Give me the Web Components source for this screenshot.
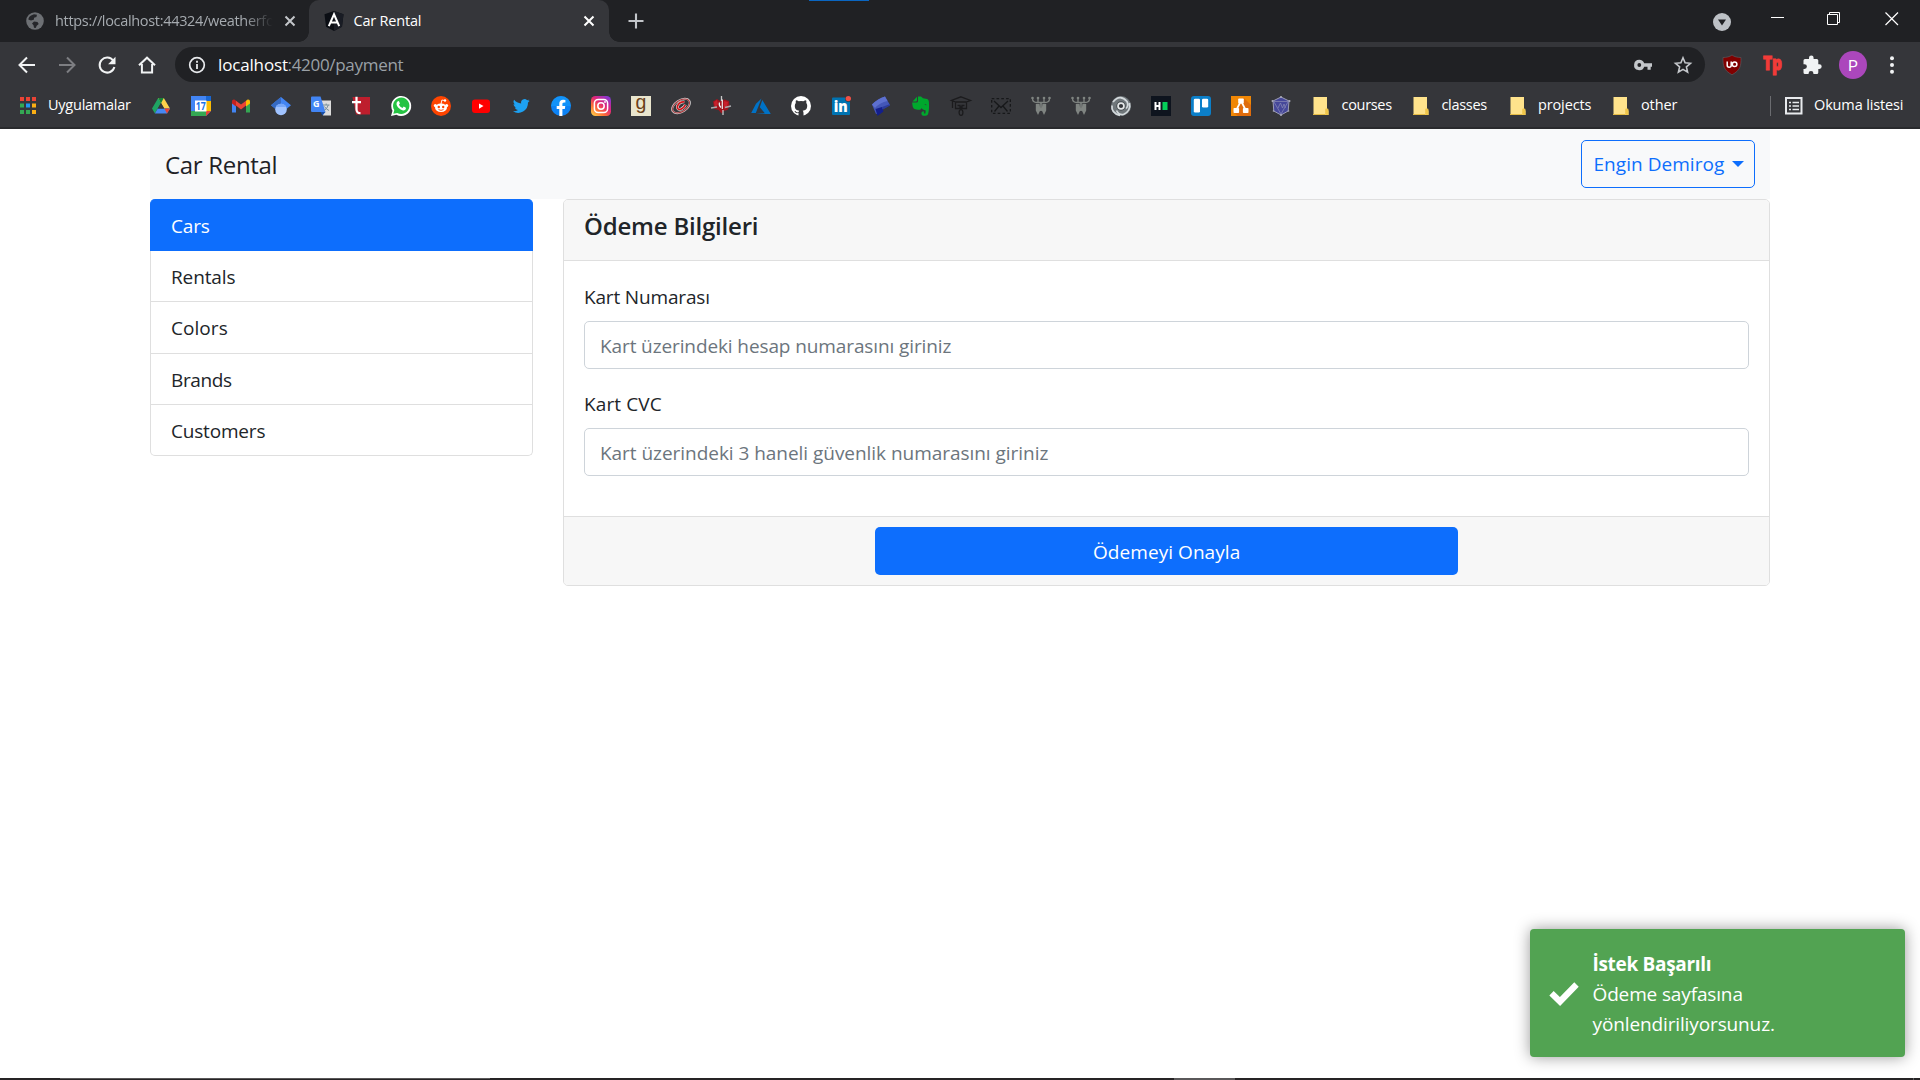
<!DOCTYPE html>
<html lang="tr">
<head>
<meta charset="utf-8">
<title>Car Rental</title>
<style>
html,body{margin:0;height:100%;overflow:hidden;background:#fff}
body{font-family:"Open Sans","Noto Sans",sans-serif;font-size:19px;color:#212529}
</style>
</head>
<body>
<desktop-screen></desktop-screen>
<script>
const make = (name, html, extra) => {
  const t = document.createElement('template');
  t.innerHTML = html;
  customElements.define(name, class extends HTMLElement {
    constructor() { super(); this.attachShadow({ mode: 'open' }).appendChild(t.content.cloneNode(true)); }
    connectedCallback() { if (extra) extra.call(this, this.shadowRoot); }
  });
};

/* Icon drawings: [viewBox width, viewBox height, markup] */
const I = {
  globe: [18,18,'<circle cx="9" cy="9" r="8.8" fill="#6d7074"/><path d="M5 3.500 8 2.200l3 .6-.6 2.200-2.300.8-.3 2L5 8.600 2.300 7.400C2.600 5.600 3.600 4.300 5 3.500zM8 9.500l3.500.4 1.200 2-2 1.900-1 2.200-1.700-.2-.5-2.600-1.500-1.700z" fill="#25262a"/>'],
  x: [12,12,'<path d="M1.500 1.500l9 9m0-9l-9 9" stroke="currentColor" stroke-width="2" fill="none"/>'],
  angular: [20,20,'<path d="M10 0l9.500 3.300-1.500 12.400L10 20 2 15.700.5 3.300z" fill="#0b0e14"/><path d="M10 0l9.500 3.300-1.500 12.400L10 20z" fill="#191c24"/><path d="M4.800 15.200L10 3.300l5.200 11.900M7 11.400h6" stroke="#fff" stroke-width="2" fill="none"/>'],
  plus: [16,16,'<path d="M8 .5v15M.5 8h15" stroke="#c3c6ca" stroke-width="2.100"/>'],
  search: [18,18,'<circle cx="9" cy="9" r="9" fill="#bdc1c6"/><path d="M5 6.500h8L9 12.500z" fill="#202124"/>'],
  min: [14,14,'<path d="M0 5.500h13" stroke="#fff" stroke-width="1"/>'],
  restore: [14,14,'<path d="M.5 2.500h10v10H.5zM2.500 2.500v-2h10v10h-2" stroke="#fff" fill="none"/>'],
  close: [14,14,'<path d="M.5 .5l12.500 12.500M13 .5L.5 13" stroke="#fff" stroke-width="1.200"/>'],
  back: [18,18,'<path d="M17 9H2M9 1.500L1.500 9 9 16.500" stroke="#f1f3f4" stroke-width="2" fill="none"/>'],
  fwd: [18,18,'<path d="M1 9h15M9 1.500L16.500 9 9 16.500" stroke="#7d7e82" stroke-width="2" fill="none"/>'],
  reload: [18,18,'<path d="M15.300 4.800A7.500 7.500 0 1 0 16.400 11" stroke="#f1f3f4" stroke-width="2" fill="none"/><path d="M17.500 .8v7.400h-7.400z" fill="#f1f3f4"/>'],
  home: [18,18,'<path d="M1 9.300L9 1.700l8 7.600M3.900 8v8.600h10.200V8" stroke="#f1f3f4" stroke-width="2" fill="none"/>'],
  info: [18,18,'<circle cx="9" cy="9" r="7.300" stroke="#e8eaed" stroke-width="1.700" fill="none"/><path d="M9 8v5M9 4.800v1.900" stroke="#e8eaed" stroke-width="1.800"/>'],
  key: [18,12,'<path fill-rule="evenodd" d="M5.300 .8a5.200 5.200 0 1 0 4.900 6.900h3.300v3h3.200v-3h1.300V4.300h-7.800A5.200 5.200 0 0 0 5.300 .8zm0 3.300a1.900 1.900 0 1 1 0 3.800 1.900 1.900 0 0 1 0-3.800z" fill="#c4c7cb"/>'],
  star: [18,18,'<path d="M9 1.800l2.100 5 5.400.5-4.100 3.600 1.200 5.300L9 13.400l-4.600 2.800 1.200-5.300-4.100-3.600 5.400-.5z" stroke="#c4c7cb" stroke-width="1.600" fill="none"/>'],
  shield: [20,20,'<path d="M10 0c2.300 1.800 5.500 2.500 9 2.500.2 8.500-.8 12.800-9 17.300C1.800 15.300.8 11 1 2.500c3.500 0 6.700-.7 9-2.500z" fill="#800000" stroke="#5c6065" stroke-width=".6"/><path d="M5.200 6.500v3.800a2 2 0 0 0 4 0V6.500" stroke="#fff" stroke-width="1.500" fill="none"/><circle cx="12.600" cy="9.300" r="2.300" stroke="#fff" stroke-width="1.500" fill="none"/>'],
  tp: [20,20,'<text x="0" y="15" font-family="Open Sans" font-weight="800" font-size="18.500" textLength="19" lengthAdjust="spacingAndGlyphs" fill="#f23b38" stroke="#f23b38" stroke-width=".9">Tp</text>'],
  puzzle: [20,20,'<path d="M1.500 5.500q0-1.500 1.500-1.500h4v-1.300a2.300 2.300 0 0 1 4.600 0V4h3.200q1.500 0 1.500 1.500v3.700h1a2.400 2.400 0 0 1 0 4.800h-1v3.500q0 1.500-1.500 1.500h-3.400v-.7a2.400 2.400 0 0 0-4.800 0v.7H3q-1.500 0-1.500-1.500V14h1a2.400 2.400 0 0 0 0-4.800h-1z" fill="#f1f3f4"/>'],
  avatar: [28,28,'<circle cx="14" cy="14" r="14" fill="#ab47bc"/><text x="14" y="19.500" text-anchor="middle" font-family="Roboto" font-size="15.500" fill="#fff">P</text>'],
  dots: [4,18,'<circle cx="2" cy="2.200" r="2" fill="#f1f3f4"/><circle cx="2" cy="9" r="2" fill="#f1f3f4"/><circle cx="2" cy="15.800" r="2" fill="#f1f3f4"/>'],
  apps: [16,17,'<path d="M0 0h4v4H0zM6 0h4v4H6zM12 0h4v4h-4z" fill="#ea4335"/><path d="M0 6.500h4v4H0zM0 13h4v4H0zM6 13h4v4H6z" fill="#34a853"/><path d="M6 6.500h4v4H6z" fill="#2196f3"/><path d="M12 6.500h4v4h-4zM12 13h4v4h-4z" fill="#fbaf14"/>'],
  drive: [20,20,'<path d="M7.200 2h5.600L6.800 12.200 3.900 17.500 1 12.500z" fill="#1fa463"/><path d="M7.200 2h5.600L19 12.500h-5.700z" fill="#ffd04b"/><path d="M6.800 12.500H19l-3 5H3.900z" fill="#4688f4"/><path d="M10 7.200l3 5.300H7z" fill="#35363a"/><path d="M13.300 12.500H19l-3 5z" fill="#ea4335"/><path d="M7.200 2h5.600L10 7.200z" fill="#188038"/>'],
  cal: [20,20,'<path d="M0 0h20v15l-5 5H0z" fill="#4285f4"/><path d="M15 5h5v10h-5z" fill="#fbbc04"/><path d="M0 15h15v5H0z" fill="#34a853"/><path d="M15 0h5v5h-5z" fill="#1967d2"/><path d="M15 15h5l-5 5z" fill="#ea4335"/><path d="M4 4.500h11.500V15.500H4z" fill="#fff"/><text x="9.800" y="14" text-anchor="middle" font-family="Open Sans" font-weight="700" font-size="10.500" textLength="10" lengthAdjust="spacingAndGlyphs" fill="#1a73e8">17</text>'],
  gmail: [20,20,'<path d="M1 5v11.500h4V9z" fill="#4285f4"/><path d="M15 9v7.500h4V5z" fill="#34a853"/><path d="M5 4.800v4.800l5 3.800 5-3.800V4.800L10 8.500z" fill="#ea4335"/><path d="M1 5.500v2l4 3V4.800L4 4C2.500 3 1 4 1 5.500z" fill="#c5221f"/><path d="M19 5.500v2l-4 3V4.800L16 4c1.500-1 3 0 3 1.500z" fill="#fbbc04"/>'],
  scholar: [20,20,'<path d="M10 1L0 9.200l4.800 4L10 8l5.200 5.200L20 9.200z" fill="#4285f4"/><path d="M10 1L0 9.200l4.800 4L10 8z" fill="#356ac3"/><circle cx="10" cy="13.500" r="5.800" fill="#a0c3ff"/><path d="M4.800 11.100a5.800 5.800 0 0 1 10.400 0z" fill="#76a7fa"/>'],
  translate: [20,20,'<path d="M9 4.500h11V19.500H12z" fill="#dcdcdc"/><path d="M0 1.300Q0 .5 1 .5h8.500l5 15.500H1.200Q0 16 0 15z" fill="#4285f4"/><path d="M9.500 16h5l-3 3.500z" fill="#174ea6"/><text x="2" y="11" font-family="Open Sans" font-weight="700" font-size="9" fill="#fff">G</text><path d="M12 9h6.500M15.200 7.500V9M17.300 9q-1 3.500-4 5.500M13.500 10.500q1.500 2.800 4.500 4" stroke="#77909c" stroke-width="1" fill="none"/>'],
  tsq: [20,20,'<path d="M1.500 1h17.500v17.500H5z" fill="#be1e2d"/><path d="M5.500 .8v12.500q0 4 4 3.900M1 6.200h9" stroke="#fff" stroke-width="2.200" fill="none"/>'],
  whatsapp: [20,20,'<path d="M0 20l1.500-5.200A10 10 0 1 1 5.400 18.700z" fill="#fff"/><path d="M2.300 17.700l1-3.600a8.200 8.200 0 1 1 3 2.800z" fill="#25c343"/><path d="M6.800 5.300q.8-.7 1.300.2l.8 1.900-1 1.300q1.200 2.200 3.600 3.200l1.200-1.300 2.200 1.100c.3 2-1.400 2.900-2.900 2.700-3.200-.6-6-3.400-6.500-6.100q-.2-1.800 1.300-3z" fill="#fff"/>'],
  reddit: [20,20,'<circle cx="10" cy="10" r="10" fill="#ff4500"/><ellipse cx="10" cy="11.800" rx="6" ry="4.200" fill="#fff"/><circle cx="4.300" cy="9.500" r="1.500" fill="#fff"/><circle cx="15.700" cy="9.500" r="1.500" fill="#fff"/><circle cx="14" cy="4.500" r="1.200" fill="#fff"/><path d="M10 8l.9-4 3 .6" stroke="#fff" stroke-width=".9" fill="none"/><circle cx="7.800" cy="11" r="1.200" fill="#ff4500"/><circle cx="12.200" cy="11" r="1.200" fill="#ff4500"/><path d="M7.500 13.600q2.500 1.500 5 0" stroke="#ff4500" stroke-width=".9" fill="none"/>'],
  youtube: [20,20,'<rect x="1" y="3.500" width="18" height="13.500" rx="3" fill="#f00"/><path d="M8 7.400v5.400l4.500-2.700z" fill="#fff"/>'],
  twitter: [20,20,'<path transform="translate(1.500 1.200) scale(.73)" d="M23.600 4.900c-.8.400-1.700.6-2.700.8 1-.6 1.700-1.500 2.100-2.600-.9.500-1.900.9-3 1.100a4.700 4.700 0 0 0-8.100 4.300C7.900 8.300 4.400 6.400 2.200 3.600a4.700 4.700 0 0 0 1.400 6.300c-.8 0-1.500-.2-2.100-.6 0 2.300 1.600 4.200 3.800 4.700-.7.200-1.400.2-2.100.1.600 1.900 2.300 3.200 4.400 3.300A9.500 9.500 0 0 1 .6 19.300 13.400 13.400 0 0 0 21.200 7.400c.9-.7 1.700-1.500 2.400-2.500z" fill="#1da1f2"/>'],
  facebook: [20,20,'<circle cx="10" cy="10" r="10" fill="#0c82f5"/><path d="M0 10a10 10 0 0 1 20 0z" fill="#18a3fb" opacity=".55"/><path d="M8.300 20v-7H5.700v-3h2.600V7.700c0-2.600 1.500-4 3.800-4l2.300.2v2.500h-1.300c-1.300 0-1.700.8-1.700 1.600V10h2.900l-.5 3h-2.400v7z" fill="#fff"/>'],
  instagram: [20,20,'<defs><linearGradient id="ig" x1=".1" y1="1" x2=".9" y2="0"><stop offset="0" stop-color="#ffd04a"/><stop offset=".3" stop-color="#fd6e35"/><stop offset=".6" stop-color="#e0257b"/><stop offset="1" stop-color="#7a3ae0"/></linearGradient></defs><rect width="20" height="20" rx="4.500" fill="url(#ig)"/><rect x="3.400" y="3.400" width="13.200" height="13.200" rx="3.800" stroke="#fff" stroke-width="1.500" fill="none"/><circle cx="10" cy="10" r="3.200" stroke="#fff" stroke-width="1.500" fill="none"/><circle cx="14" cy="6" r=".9" fill="#fff"/>'],
  goodreads: [20,20,'<path d="M0 0h20v20H0z" fill="#e9e5cd"/><text x="10" y="13" text-anchor="middle" font-family="Liberation Sans" font-size="19.500" fill="#6b3f18">g</text>'],
  swirl: [20,20,'<g transform="rotate(-32 10 10)" fill="none"><ellipse cx="10" cy="10" rx="9.800" ry="5.800" stroke="#cfcfcf" stroke-width="2"/><ellipse cx="10" cy="10" rx="9.600" ry="5.600" stroke="#a8383c" stroke-width="1"/><path d="M15 8.300Q11 5.200 6.800 8.300q-2.500 3 1.500 4.300 3.500.6 6-1.300" stroke="#e6e6e6" stroke-width="2.800"/><path d="M15 8.300Q11 5.200 6.800 8.300q-2.500 3 1.500 4.300 3.500.6 6-1.300" stroke="#d3161c" stroke-width="1.700"/></g>'],
  crest: [20,20,'<path d="M2 5.500l4-2.500 3 2 4.500-1.500L18 5l.5 5-2 4-4 1-2 2.500-3-3.500-4-1z" fill="#a0151e"/><path d="M3 6l3-2 1 4-3 4zM13 5l4 1-1 5-3 2z" fill="#c8202b"/><path d="M0 12l6-1M14 11.500l6-1.500" stroke="#a9a9ab" stroke-width="1.300"/><path d="M10.500 0v5M12 14v5" stroke="#c9c9c9" stroke-width="1.300"/><path d="M11.300 3.500v9.500M8.500 6.500q-1 3 1.500 5" stroke="#eee" stroke-width="1.200" fill="none"/>'],
  azure: [20,20,'<path d="M10.500 2.500L5 7.700.2 17h4.600zM11.300 4L8.800 11.200l5 6.000-9 .8H19.800z" fill="#0072c6"/>'],
  github: [20,20,'<circle cx="10" cy="10" r="10" fill="#fff"/><path d="M7.500 20v-3c-2.500.6-3.500-.6-4-1.900l1-.1c.8 1.600 1.800 1.500 3 1.200.1-.7.400-1.100.8-1.500-2.500-.3-4.500-1.300-4.500-5 0-1.200.4-2 1-2.700-.2-.8-.2-1.800.2-2.800.9 0 1.900.5 2.700 1.100a9 9 0 0 1 4.700 0c.8-.6 1.800-1.100 2.700-1.100.4 1 .4 2 .1 2.800.7.700 1 1.500 1 2.700 0 3.700-2 4.700-4.500 5 .6.500.8 1.300.8 2.300v3z" fill="#35363a"/>'],
  linkedin: [20,20,'<rect x="1" y="1.500" width="18" height="17.500" rx="1" fill="#0073b1"/><text x="2.700" y="15.800" font-family="Open Sans" font-weight="800" font-size="15.500" textLength="14" lengthAdjust="spacingAndGlyphs" fill="#fff">in</text><circle cx="17.300" cy="2.600" r="3.300" fill="#35363a"/><circle cx="17.300" cy="2.600" r="2.700" fill="#f05045"/>'],
  tilted: [20,20,'<path d="M1 8.500Q7 2.500 14 .5l5 8.500-7 4L9 17.500 5 18z" fill="#4457b8"/><path d="M1 8.500Q7 2.500 14 .5l2.500 4.500Q9 6.500 4 12z" fill="#5d70cf"/><path d="M4.500 13l6.500-2 1.500 4.500L6.500 20z" fill="#141f8c"/><path d="M11 11l7.500-2.700.5 1.200-7 4z" fill="#2c3c9c"/>'],
  evernote: [20,20,'<path d="M6 .8v3.700q0 1-1 1H1.500L6 .8zM7 .5h3l2 1.700 4.200.8q1.500.5 1.700 3c.4 5 .1 9-.8 12-.5 1.500-2 1.800-4 1.800-1.600 0-2.700-.8-2.700-2.300s1-2.300 2.500-2.300v2.300h1.500l.3-3c-2.300-.3-3.400-1-4-2.400-.7 1.700-2.200 1.900-4 1.700-3.700-.4-4.900-1.500-5.300-5L1.100 6.500h4.300q1.600 0 1.600-1.600z" fill="#00a82d"/><path d="M13.200 8.800q1.500-1.200 2.500.4z" fill="#35363a"/>'],
  cap: [20,20,'<g stroke="#1b1b1d" stroke-width="1.300" fill="none"><path d="M10 .8l9.500 3.700L15 6H5L.5 4.500zM4.500 6v6.500h11V6M6.500 9.500h2.500v1.500h2V9.500h2.500M1.500 5v7"/><ellipse cx="10" cy="16.500" rx="1.900" ry="2.900"/></g>'],
  mail: [20,20,'<g stroke="#17181a" stroke-width="1.300" fill="none"><path d="M.7 2.700h18.600v14.600H.7z" stroke-dasharray="2.600 2.200"/><path d="M3 5l7 6.500L17 5M3.500 15.500L8 10M16.500 15.500L12 10"/></g>'],
  fork: [20,20,'<g stroke="#7d827f" stroke-width="1.300" fill="none"><path d="M1.500 2.500q0 4 4.500 4h8q4.500 0 4.500-4M7 2v4.500M13 2v4.500"/></g><g fill="#7f8481"><path d="M4.800 8h3.800l.8 6L7 19l-2.200-4.500zM11.400 8h3.800v6.500L13 19l-2.400-5zM9.200 7h1.600v8H9.200z"/><circle cx="1.500" cy="2" r="1.300"/><circle cx="7" cy="2" r="1.300"/><circle cx="13" cy="2" r="1.300"/><circle cx="18.500" cy="2" r="1.300"/></g>'],
  spiral: [20,20,'<circle cx="10" cy="10" r="10" fill="#6f767a"/><g fill="none" stroke="#d3d9dc" stroke-width="1.700"><path d="M2 6Q9-2.500 16 5.500q2 4-1 7M18.500 7q1.500 8-6 11.500-5 .5-7-4M9 19.500Q0 17 1 9.500"/></g><circle cx="10" cy="10" r="4.700" fill="#454c50"/><circle cx="10" cy="10" r="3.800" fill="#e4e7e8"/><circle cx="10" cy="10" r="2.100" fill="#33363a"/>'],
  hk: [20,20,'<path d="M0 0h20v20H0z" fill="#0e141e"/><path d="M4.500 6v8M8.500 6v8M4.500 10h4" stroke="#fff" stroke-width="2"/><path d="M11.500 6h5v8h-5z" fill="#05ce59"/>'],
  trello: [20,20,'<rect width="20" height="20" rx="3" fill="#0b7fc9"/><rect x="2.800" y="2.800" width="6.200" height="13.700" rx="1.300" fill="#fff"/><rect x="11" y="2.800" width="6.200" height="8.700" rx="1.300" fill="#fff"/>'],
  drawio: [20,20,'<path d="M0 0h20v20H0z" fill="#f08705"/><path d="M13 2l7 7v11H7l-5-4z" fill="#df6c0c"/><path d="M10 5L5.300 14M10 5l4.700 9" stroke="#fff" stroke-width="1.700"/><rect x="7.200" y="2.500" width="5.600" height="5" rx=".8" fill="#fff"/><rect x="2.500" y="12" width="5.600" height="5" rx=".8" fill="#fff"/><rect x="11.900" y="12" width="5.600" height="5" rx=".8" fill="#fff"/>'],
  hex: [20,20,'<path d="M10 1l8 4-.8 10L10 19l-7.200-4L2 5z" fill="#46489a" stroke="#9b9cb5" stroke-width="1"/><path d="M3 5.500h14M3 6l7 12 7-12M7 12l2.500-5 2 5 1.500-4 1.500 4" stroke="#8384b3" stroke-width=".8" fill="none"/><g fill="#adadbd"><circle cx="10" cy="1" r="1"/><circle cx="1.500" cy="5" r="1"/><circle cx="18.500" cy="5" r="1"/><circle cx="10" cy="19" r="1"/><circle cx="2.500" cy="15" r=".8"/><circle cx="17.500" cy="15" r=".8"/></g>'],
  folder: [16,18,'<path d="M.5 0H14v13.500H15.500V18H.5z" fill="#ffe38c"/><path d="M0 17h12v1H0z" fill="#e5bc45"/><path d="M12.200 12.500q0-1 1-1h1q1.300 0 1.300 1.200V18h-3.300z" fill="#f0c64a"/>'],
  list: [18,18,'<rect x="1" y="1" width="15.500" height="15.500" stroke="#e8eaed" stroke-width="2" fill="none"/><path d="M4 5.500h2M4 9h2M4 12.500h2M7.500 5.500h6.500M7.500 9h6.500M7.500 12.500h6.500" stroke="#e8eaed" stroke-width="1.600"/>'],
  check: [30,30,'<path d="M2.500 15.300L11 23.500 27.500 6.500" stroke="#fff" stroke-width="6.200" fill="none"/>'],
};

/* <ui-icon name="..."> draws one icon at its natural size */
customElements.define('ui-icon', class extends HTMLElement {
  connectedCallback() {
    if (this.shadowRoot) return;
    const [w, h, m] = I[this.getAttribute('name')];
    this.attachShadow({ mode: 'open' }).innerHTML =
      `<style>:host{display:block;flex:none;width:${w}px;height:${h}px}svg{display:block;overflow:visible}</style><svg width="${w}" height="${h}" viewBox="0 0 ${w} ${h}">${m}</svg>`;
  }
});

/* <fit-text w="..."> tracks its text so that it fills the given width */
customElements.define('fit-text', class extends HTMLElement {
  connectedCallback() {
    if (this.shadowRoot) return;
    this.attachShadow({ mode: 'open' }).innerHTML =
      '<style>:host{display:block;flex:none;white-space:nowrap}span{display:inline-block}</style><span><slot></slot></span>';
    const s = this.shadowRoot.querySelector('span');
    const n = this.textContent.length, w = +this.getAttribute('w');
    this.style.width = w + 'px';
    s.style.letterSpacing = ((w + .3 - s.getBoundingClientRect().width) / n).toFixed(3) + 'px';
  }
});

make('browser-tabs', `<style>
:host{display:flex;height:42px;background:#202124;color:#fff;font-size:14.500px;line-height:42px}
.tab{display:flex;align-items:center;box-sizing:border-box;height:42px}
.one{width:309px;padding-left:26px;color:#a6abb0}
.one .t{width:220px;margin:0 9px 0 11px;-webkit-mask:linear-gradient(90deg,#000 86%,transparent 99%)}
.two{width:300px;background:#35363a;border-radius:10px 10px 0 0;padding-left:15px;position:relative}
.two:before,.two:after{content:"";position:absolute;bottom:0;width:10px;height:10px}
.two:before{left:-10px;background:radial-gradient(circle at 0 0,transparent 9.500px,#35363a 10px)}
.two:after{right:-10px;background:radial-gradient(circle at 100% 0,transparent 9.500px,#35363a 10px)}
.two .t{margin:0 162px 0 9.500px}
.plus{margin:13px 0 0 19px}
.mark{width:60px;height:1px;background:#0a66c2;margin-left:165px}
.win{margin-left:auto;display:flex;padding-right:21px}
</style>
<div class="tab one"><ui-icon name="globe"></ui-icon><div class="t"><fit-text w="219">https://localhost:44324/weatherfo</fit-text></div><ui-icon name="x" style="color:#c3c6ca"></ui-icon></div>
<div class="tab two"><ui-icon name="angular"></ui-icon><fit-text class="t" w="67.500">Car Rental</fit-text><ui-icon name="x"></ui-icon></div>
<ui-icon class="plus" name="plus"></ui-icon><div class="mark"></div>
<div class="win"><ui-icon name="search" style="margin:12.500px 40px 0 0"></ui-icon><ui-icon name="min" style="margin:12px 42px 0 0"></ui-icon><ui-icon name="restore" style="margin:12px 44px 0 0"></ui-icon><ui-icon name="close" style="margin:12px 0 0"></ui-icon></div>`);

make('browser-toolbar', `<style>
:host{display:flex;align-items:center;box-sizing:border-box;height:45px;background:#35363a;padding:0 25px 0 18px}
.nav{display:flex;gap:22px;width:157px;flex:none}
.box{box-sizing:border-box;flex:none;width:1530px;height:35px;border-radius:18px;background:#202124;display:flex;align-items:center;padding:0 13px 0 13px;font-size:17px;line-height:34px}
.ext{display:flex;align-items:center;margin-left:17px}
</style>
<div class="nav"><ui-icon name="back"></ui-icon><ui-icon name="fwd"></ui-icon><ui-icon name="reload"></ui-icon><ui-icon name="home"></ui-icon></div>
<div class="box"><ui-icon name="info"></ui-icon><fit-text w="69.500" style="color:#fff;margin-left:12px">localhost</fit-text><fit-text w="115.500" style="color:#9aa0a6">:4200/payment</fit-text><ui-icon name="key" style="margin-left:auto"></ui-icon><ui-icon name="star" style="margin-left:22px"></ui-icon></div>
<div class="ext"><ui-icon name="shield"></ui-icon><ui-icon name="tp" style="margin-left:21px"></ui-icon><ui-icon name="puzzle" style="margin-left:19px"></ui-icon><ui-icon name="avatar" style="margin-left:17px"></ui-icon><ui-icon name="dots" style="margin-left:23px"></ui-icon></div>`);

make('browser-bookmarks', `<style>
:host{display:flex;align-items:center;box-sizing:border-box;height:42px;padding:0 17px 3px 20px;background:#35363a;border-bottom:2px solid #292a2d;color:#fff;font-size:14.500px;line-height:20px}
fit-text{margin-bottom:1px}
.row{display:flex;gap:20px;margin-left:20.500px}
.f{display:flex;align-items:center}
.f fit-text{margin-left:12.500px}
.sep{width:1px;height:20px;background:#6b6c70;margin-left:auto}
</style>
<ui-icon name="apps"></ui-icon><fit-text w="82.500" style="margin-left:12px">Uygulamalar</fit-text>
<div class="row"></div>
<div class="f" style="margin-left:22px"><ui-icon name="folder"></ui-icon><fit-text w="50">courses</fit-text></div>
<div class="f" style="margin-left:21.500px"><ui-icon name="folder"></ui-icon><fit-text w="45">classes</fit-text></div>
<div class="f" style="margin-left:23px"><ui-icon name="folder"></ui-icon><fit-text w="53">projects</fit-text></div>
<div class="f" style="margin-left:21.500px"><ui-icon name="folder"></ui-icon><fit-text w="36">other</fit-text></div>
<div class="sep"></div>
<div class="f" style="margin-left:14px"><ui-icon name="list"></ui-icon><fit-text w="89" style="margin-left:11px">Okuma listesi</fit-text></div>`,
function (r) {
  r.querySelector('.row').innerHTML = ('drive cal gmail scholar translate tsq whatsapp reddit youtube twitter facebook instagram goodreads swirl crest azure github linkedin tilted evernote cap mail fork fork spiral hk trello drawio hex')
    .split(' ').map(n => `<ui-icon name="${n}"></ui-icon>`).join('');
});

make('app-navbar', `<style>
:host{display:flex;box-sizing:border-box;height:70px;align-items:center;justify-content:space-between;background:#f8f9fa;padding:0 15px}
.brand{font-size:24px;line-height:38px;margin-top:1px;color:#1f2226}
.btn{display:flex;box-sizing:border-box;width:174px;height:48px;border:1px solid #0d6efd;border-radius:5px;color:#0d6efd;padding:0 0 0 11.500px;line-height:47px}
.caret{margin:20px 0 0 7.500px;width:0;height:0;border:6px solid transparent;border-top-color:#0d6efd;border-bottom:0}
</style><fit-text class="brand" w="112">Car Rental</fit-text>
<div class="btn"><fit-text w="130.500">Engin Demirog</fit-text><div class="caret"></div></div>`);

make('side-menu', `<style>
:host{display:block;flex:none;width:383px}
div{box-sizing:border-box;height:51.250px;border:1px solid #dfdfdf;border-top:0;padding:2px 0 0 20px;line-height:49px}
.a{height:52px;background:#0d6efd;border-color:#0d6efd;color:#fff;border-radius:5px 5px 0 0;padding-top:3px}
div:last-child{border-radius:0 0 5px 5px}
</style><div class="a"><fit-text w="38.500">Cars</fit-text></div><div><fit-text w="64">Rentals</fit-text></div><div><fit-text w="56.500">Colors</fit-text></div><div><fit-text w="60.500">Brands</fit-text></div><div><fit-text w="94">Customers</fit-text></div>`);

make('form-field', `<style>
:host{display:block}
.l{line-height:30px;padding-top:1px;margin-bottom:9px}
.i{box-sizing:border-box;height:48px;border:1px solid #ced4da;border-radius:5px;color:#6c757d;padding:2px 0 0 15px;line-height:44px;background:#fff}
</style><div class="l"><slot name="label"></slot></div><div class="i"><slot></slot></div>`);

make('payment-card', `<style>
:host{display:block;box-sizing:border-box;width:1207px;height:387px;border:1px solid #dfdfdf;border-radius:5px;overflow:hidden}
.h{box-sizing:border-box;height:61px;background:#f7f7f7;border-bottom:1px solid #dfdfdf;padding:9px 20px 0;font-size:24px;font-weight:600;line-height:34px}
.b{box-sizing:border-box;height:255px;padding:20px 20px 0;display:flex;flex-direction:column;gap:19px}
form-field + form-field{height:87px;--d:1}
.f{box-sizing:border-box;display:flex;justify-content:center;align-items:flex-start;height:69px;padding-top:10px;background:#f7f7f7;border-top:1px solid #dfdfdf}
.btn{display:flex;justify-content:center;width:583px;height:48px;background:#0d6efd;color:#fff;border-radius:5px;line-height:50px}
</style>
<div class="h"><fit-text w="174">Ödeme Bilgileri</fit-text></div>
<div class="b"><form-field><fit-text slot="label" w="125.500">Kart Numarası</fit-text><fit-text w="351">Kart üzerindeki hesap numarasını giriniz</fit-text></form-field>
<form-field><fit-text slot="label" w="77.500">Kart CVC</fit-text><fit-text w="448">Kart üzerindeki 3 haneli güvenlik numarasını giriniz</fit-text></form-field></div>
<div class="f"><div class="btn"><fit-text w="147">Ödemeyi Onayla</fit-text></div></div>`);

make('toast-message', `<style>
:host{position:absolute;left:1530px;top:929px;width:375px;height:128px;box-sizing:border-box;border-radius:4px;background:#52a352;box-shadow:0 0 15px #999;color:#fff;display:flex;align-items:center;padding:0 0 0 18.500px;line-height:30px}
.t{margin:1px 0 0 14px}
</style><ui-icon name="check"></ui-icon><div class="t"><fit-text w="118.500" style="font-weight:700">İstek Başarılı</fit-text><fit-text w="150">Ödeme sayfasına</fit-text><fit-text w="182">yönlendiriliyorsunuz.</fit-text></div>`);

make('task-edge', `<style>
:host{display:flex;height:2px;background:#262425}
i{display:block;background:#5a5859}
</style><i style="width:430px;height:1px;margin-left:60px"></i><i style="width:61px;margin-left:684px"></i><i style="width:1px;margin-left:678px"></i>`);

make('desktop-screen', `<style>
:host{display:flex;flex-direction:column;width:1920px;height:1080px;overflow:hidden}
main{flex:1;box-sizing:border-box;padding:0 150px}
.row{display:flex;gap:30px}
</style>
<browser-tabs></browser-tabs><browser-toolbar></browser-toolbar><browser-bookmarks></browser-bookmarks>
<main><app-navbar></app-navbar><div class="row"><side-menu></side-menu><payment-card></payment-card></div></main>
<task-edge></task-edge><toast-message></toast-message>`);
</script>
</body>
</html>
